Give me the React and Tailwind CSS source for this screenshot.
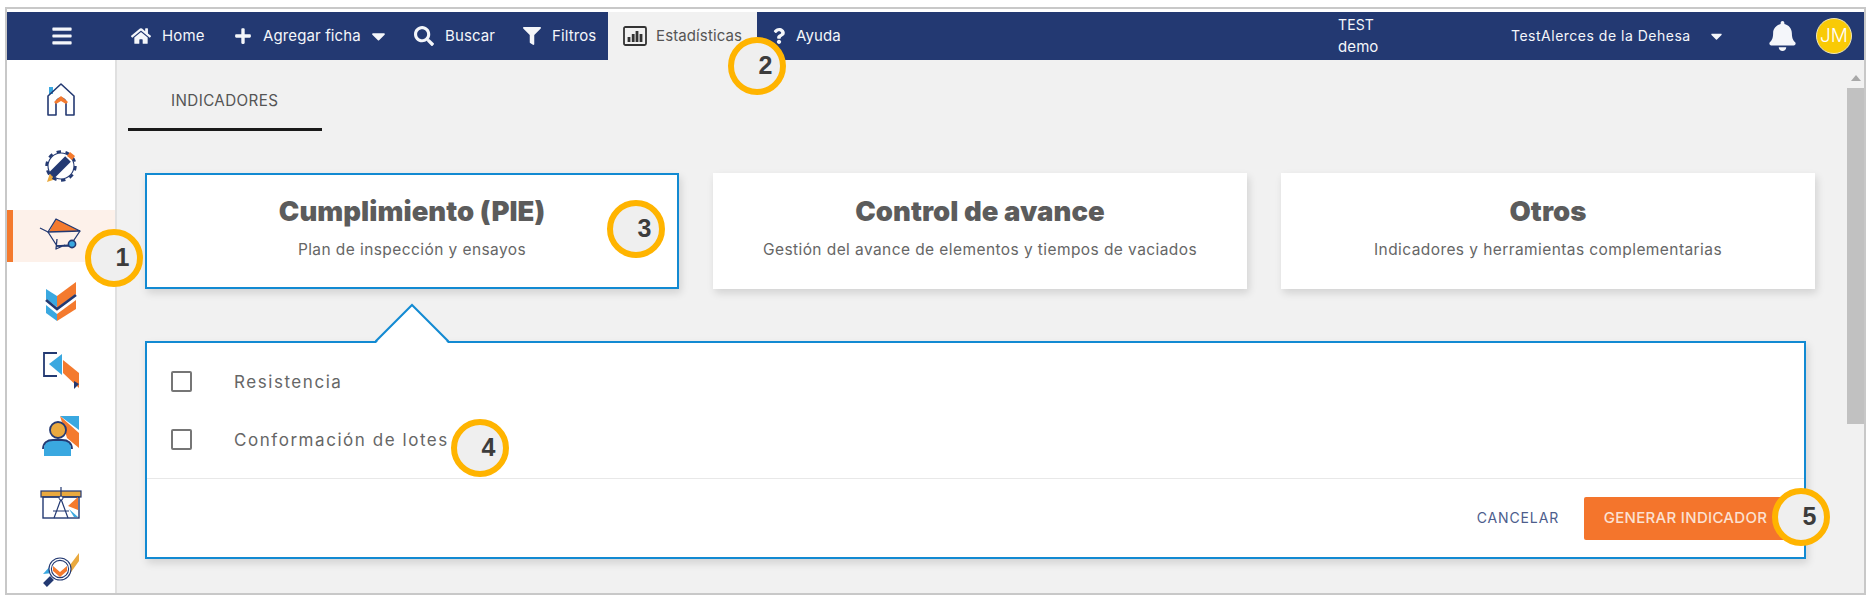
import React from "react";
import { FaBars, FaHome, FaPlus, FaCaretDown, FaSearch, FaFilter, FaQuestion, FaBell } from "react-icons/fa";

const NAVY = "#233972";
const OR = "#f47a2e";
const BL = "#3aa8e0";
const AM = "#e9a93f";

function HomeI() {
  return (
    <svg width="30" height="34" viewBox="0 0 30 34" fill="none">
      <path d="M3 5h4v7H3z" fill={BL} />
      <path d="M2 14 15 2l13 12v19h-8V21a5 5 0 0 0-10 0v12H2z" stroke={NAVY} strokeWidth="1.6" strokeLinejoin="round" />
      <path d="M8 20l7-6 7 6-2 2-5-3-5 3z" fill={OR} />
    </svg>
  );
}
function GearI() {
  return (
    <svg width="34" height="34" viewBox="0 0 34 34" fill="none">
      <path d="M3 33l3-9 6 6z" fill={AM} />
      <circle cx="17" cy="17" r="14.4" stroke={NAVY} strokeWidth="2.6" strokeDasharray="4.4 4.6" />
      <circle cx="17" cy="17" r="13" fill="#fff" stroke={NAVY} strokeWidth="1.1" />
      <path d="M8 26 24 10" stroke={NAVY} strokeWidth="8" />
      <path d="M26 3l5 4-3 4-5-4z" fill={OR} />
    </svg>
  );
}
function BarrowI() {
  return (
    <svg width="44" height="34" viewBox="0 0 44 34" fill="none">
      <path d="M17 2 41 14 10 15z" fill={OR} />
      <path d="M17 2 41 14 9 15z" stroke={NAVY} strokeWidth="1.3" strokeLinejoin="round" />
      <path d="M1 11l8 4 9 14h13l10-15M18 22l-1 10 9-4" stroke={NAVY} strokeWidth="1.3" strokeLinejoin="round" />
      <path d="M18 29l14-1" stroke={NAVY} strokeWidth="1.3" />
      <circle cx="33" cy="27" r="3.6" fill={BL} stroke={NAVY} strokeWidth="1.6" />
    </svg>
  );
}
function CheckI() {
  return (
    <svg width="32" height="40" viewBox="0 0 32 40" fill="none">
      <path d="M1 8l11 7v11L1 18z" fill={BL} />
      <path d="M12 15 31 1v12L12 27z" fill={OR} />
      <path d="M1 19l11 9 19-14" stroke={NAVY} strokeWidth="2.6" />
      <path d="M1 24l11 9v7L1 32z" fill={BL} />
      <path d="M12 33 31 19v9L12 40z" fill={OR} />
    </svg>
  );
}
function ArrowI() {
  return (
    <svg width="38" height="38" viewBox="0 0 38 38" fill="none">
      <path d="M15 2H2v23h13" stroke={NAVY} strokeWidth="1.8" />
      <path d="M7 13 20 3v21z" fill={BL} />
      <path d="M21 9l16 13v15L21 22z" fill={OR} />
      <path d="M32 30l5 3-5 5z" fill={NAVY} />
    </svg>
  );
}
function PersonI() {
  return (
    <svg width="38" height="42" viewBox="0 0 38 42" fill="none">
      <path d="M18 1h19v14z" fill={BL} />
      <path d="M18 1l19 17v15L25 23z" fill={OR} />
      <path d="M2 41V33c0-5 4-8 9-8h9c5 0 9 3 9 8v8z" fill={BL} />
      <path d="M1 34c0-6 4-9 10-9h9c6 0 10 3 10 9" stroke={NAVY} strokeWidth="1.8" />
      <circle cx="16" cy="15" r="8" fill={AM} stroke={NAVY} strokeWidth="1.8" />
    </svg>
  );
}
function BoardI() {
  return (
    <svg width="42" height="32" viewBox="0 0 42 32" fill="none">
      <rect x="1" y="4" width="40" height="6" fill={AM} stroke={NAVY} strokeWidth="1.2" />
      <rect x="3" y="10" width="36" height="21" stroke={NAVY} strokeWidth="1.4" />
      <path d="M28 19l10-9v13z" fill={OR} />
      <path d="M29 22l9 8h-4z" fill={BL} />
      <path d="M21 0v12M21 12l-7 19M21 12l7 19M13 24h16" stroke={NAVY} strokeWidth="1.2" />
      <circle cx="21" cy="11" r="2" fill="#fff" stroke={NAVY} strokeWidth="1" />
    </svg>
  );
}
function SearchI() {
  return (
    <svg width="38" height="36" viewBox="0 0 38 36" fill="none">
      <path d="M1 22 11 11v10z" fill={BL} />
      <path d="M25 17 37 1v8L27 23z" fill={AM} />
      <circle cx="18" cy="17" r="11" fill="#fff" stroke={NAVY} strokeWidth="1.1" />
      <circle cx="18" cy="17" r="8.6" stroke={NAVY} strokeWidth="1.1" />
      <path d="M11 14l7 6 7-6v5l-7 6-7-6z" fill={OR} />
      <path d="M3 33l7-7" stroke={NAVY} strokeWidth="5.4" />
    </svg>
  );
}
function ChartI() {
  return (
    <svg width="24" height="20" viewBox="0 0 24 20" fill="none">
      <rect x="1" y="1" width="22" height="18" rx="1.5" stroke="#333" strokeWidth="1.8" />
      <path d="M4.6 11h2.8v5H4.6zM8.8 8h2.8v8H8.8zM12.6 5h2.8v11h-2.8zM16.6 8h2.8v8h-2.8z" fill="#333" />
    </svg>
  );
}

function NavLink({ icon, label, iconW, gap, textW, ml }) {
  return (
    <div className={`flex items-center ${ml}`}>
      <span className={`flex justify-center ${iconW} ${gap}`}>{icon}</span>
      <span className={`whitespace-nowrap text-[15px] tracking-[0.12px] ${textW}`}>{label}</span>
    </div>
  );
}

function Badge({ n, pos }) {
  return (
    <div className={`absolute ${pos} flex h-[58px] w-[58px] items-center justify-center rounded-full border-[6px] border-[#ffb400] bg-[#efefef] pl-[17px] font-['Liberation_Sans',sans-serif] text-[25px] font-bold text-[#3c3c3c]`}>
      {n}
    </div>
  );
}

function Card({ title, sub, active }) {
  return (
    <div className={`flex h-[116px] w-[534px] flex-col items-center bg-white pt-[18px] shadow-[2px_4px_8px_rgba(0,0,0,0.13)] ${active ? "border-2 border-[#128ad2]" : ""}`}>
      <div className={`text-[27.5px] leading-[36px] font-black tracking-[0.05px] text-[#5c5c5c] ${active ? "" : "mt-[2px]"}`}>{title}</div>
      <div className="mt-[11px] text-[15.5px] leading-[20px] tracking-[0.42px] text-[#666]">{sub}</div>
    </div>
  );
}

function Check({ label }) {
  return (
    <div className="flex h-[21px] items-center">
      <span className="h-[21px] w-[21px] rounded-[2px] border-2 border-[#767676] bg-white" />
      <span className="ml-[42px] whitespace-nowrap pt-[2px] text-[17px] tracking-[1.55px] text-[#666]">{label}</span>
    </div>
  );
}

const side = [
  { I: HomeI, mt: "mt-[13px]" },
  { I: GearI, mt: "mt-[15px]" },
  { I: BarrowI, mt: "mt-[18px]", active: true },
  { I: CheckI, mt: "mt-[13px]" },
  { I: ArrowI, mt: "mt-[17px]" },
  { I: PersonI, mt: "mt-[14px]" },
  { I: BoardI, mt: "mt-[15px]" },
  { I: SearchI, mt: "mt-[15px]" },
];

export default function App() {
  return (
    <div className="relative h-[601px] w-full overflow-hidden bg-white pt-[7px] pr-[8px] pb-[6px] pl-[5px] font-['Inter',sans-serif]">
      <div className="flex h-full flex-col border-2 border-[#c8c8c8] pt-[3px]">
        <header className="flex h-[48px] shrink-0 items-center bg-[#233972] text-[#f4f6fa]">
          <FaBars className="ml-[45px] h-[22px] w-[20px]" />
          <NavLink ml="ml-[59px]" iconW="w-[20px]" gap="mr-[11px]" textW="w-[42px]" icon={<FaHome className="h-[18px] w-[20px]" />} label="Home" />
          <NavLink ml="ml-[29px]" iconW="w-[19px]" gap="mr-[11px]" textW="w-[98px]" icon={<FaPlus className="h-[18px] w-[18px]" />} label="Agregar ficha" />
          <FaCaretDown className="ml-[9px] h-[22px] w-[17px]" />
          <NavLink ml="ml-[26px]" iconW="w-[22px]" gap="mr-[10px]" textW="w-[49px]" icon={<FaSearch className="h-[20px] w-[20px]" />} label="Buscar" />
          <NavLink ml="ml-[29px]" iconW="w-[18px]" gap="mr-[11px]" textW="w-[42px]" icon={<FaFilter className="h-[18px] w-[18px]" />} label="Filtros" />
          <div className="ml-[14px] flex h-full w-[149px] items-center bg-[#f1f1f1] pl-[15px] text-[#555]">
            <ChartI />
            <span className="ml-[9px] whitespace-nowrap text-[15px] tracking-[0.12px]">Estadísticas</span>
          </div>
          <NavLink ml="ml-[16px]" iconW="w-[12px]" gap="mr-[11px]" textW="w-[46px]" icon={<FaQuestion className="h-[16px] w-[12px]" />} label="Ayuda" />
          <div className="ml-[496px] flex w-[80px] flex-col text-[14px] leading-[22px] tracking-[0.1px]">
            <span>TEST</span>
            <span className="text-[15px]">demo</span>
          </div>
          <span className="ml-[93px] w-[182px] pb-[1px] text-[14px] tracking-[0.5px] whitespace-nowrap">TestAlerces de la Dehesa</span>
          <FaCaretDown className="ml-[16px] h-[18px] w-[15px]" />
          <FaBell className="ml-[45px] h-[30px] w-[27px]" />
          <div className="ml-[20px] flex h-[36px] w-[36px] items-center justify-center rounded-full border border-[#f0e6b8] bg-[#f9ca06] text-[19px] font-light text-white">JM</div>
        </header>

        <div className="flex min-h-0 flex-1">
          <aside className="w-[110px] shrink-0 overflow-hidden border-r-2 border-[#e0e0e0] bg-white">
            {side.map(({ I, mt, active }, i) => (
              <div key={i} className={`${mt} flex h-[52px] items-center justify-center ${active ? "border-l-[6px] border-[#f47a2e] bg-[#fdf1ea] pr-[6px] pb-[4px]" : ""}`}>
                <I />
              </div>
            ))}
          </aside>

          <main className="min-w-0 flex-1 bg-[#f1f1f1] pl-[28px]">
            <div className="-ml-[17px] h-[71px] w-[194px] border-b-[3px] border-[#1a1a1a] pt-[31px] pl-[43px] text-[15.2px] leading-[20px] tracking-[0.4px] text-[#555]">INDICADORES</div>
            <div className="mt-[42px] flex gap-[34px]">
              <Card active title="Cumplimiento (PIE)" sub="Plan de inspección y ensayos" />
              <Card title="Control de avance" sub="Gestión del avance de elementos y tiempos de vaciados" />
              <Card title="Otros" sub="Indicadores y herramientas complementarias" />
            </div>
            <section className="relative mt-[52px] h-[218px] w-[1661px] border-2 border-[#128ad2] bg-white shadow-[2px_4px_8px_rgba(0,0,0,0.13)]">
              <svg className="absolute top-[-40px] left-[228px]" width="74" height="40" viewBox="0 0 74 40" fill="none">
                <path d="M1 40 37 2l36 38z" fill="#fff" />
                <path d="M0 39 37 2l37 37" stroke="#128ad2" strokeWidth="2" />
              </svg>
              <div className="flex flex-col gap-[37px] pt-[28px] pl-[24px]">
                <Check label="Resistencia" />
                <Check label="Conformación de lotes" />
              </div>
              <div className="mt-[28px] flex h-[62px] items-start justify-end border-t border-[#e8e8e8] pt-[18px] pr-[14px]">
                <span className="mt-[11px] text-[14px] leading-[20px] tracking-[0.85px] text-[#4d5d8c]">CANCELAR</span>
                <button className="ml-[25px] h-[43px] w-[206px] rounded-[2px] bg-[#f4752c] pr-[3px] text-[15px] font-medium tracking-[0.3px] text-[#fbe1d2]">GENERAR INDICADOR</button>
              </div>
            </section>
          </main>

          <div className="flex w-[17px] shrink-0 flex-col items-center bg-[#f1f1f1] pt-[15px]">
            <span className="h-0 w-0 border-x-[5px] border-b-[6px] border-x-transparent border-b-[#a8a8a8]" />
            <span className="mt-[7px] h-[336px] w-full bg-[#c1c1c1]" />
          </div>
        </div>
      </div>

      <Badge n="1" pos="left-[85px] top-[229px]" />
      <Badge n="2" pos="left-[728px] top-[37px]" />
      <Badge n="3" pos="left-[607px] top-[200px]" />
      <Badge n="4" pos="left-[451px] top-[419px]" />
      <Badge n="5" pos="left-[1772px] top-[488px]" />
    </div>
  );
}
